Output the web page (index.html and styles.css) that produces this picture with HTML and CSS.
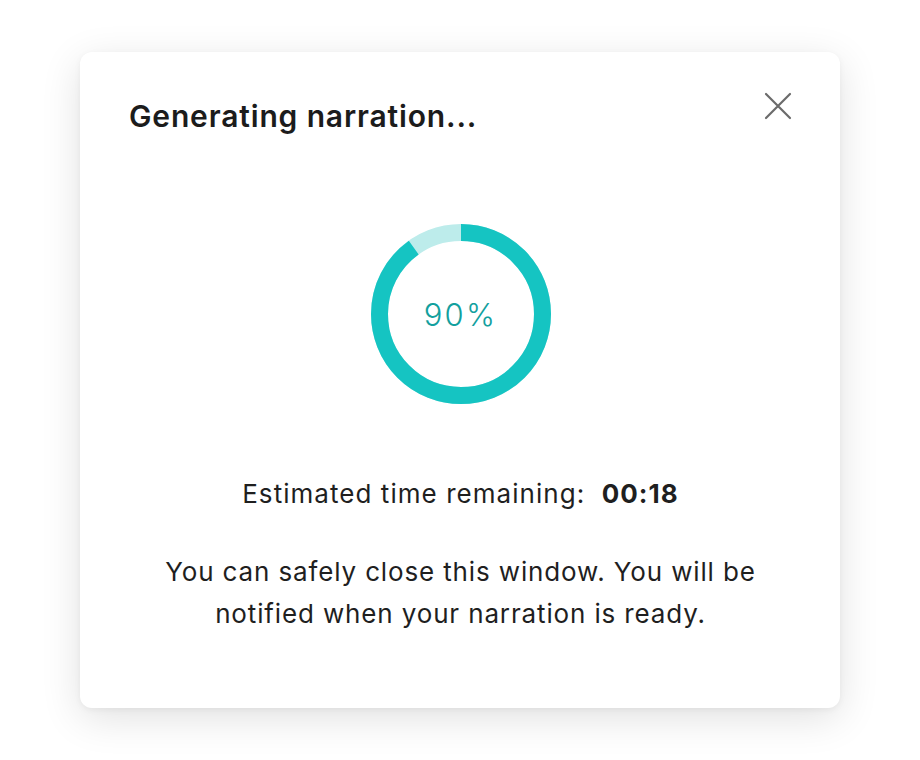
FILE: index.html
```html
<!DOCTYPE html>
<html lang="en">
<head>
<meta charset="utf-8">
<title>Generating narration</title>
<link rel="stylesheet" href="styles.css">
</head>
<body>
<div class="card">
  <div class="header">
    <h1 class="title">Generating narration...</h1>
    <button class="close" aria-label="Close">
      <svg width="28" height="28" viewBox="0 0 28 28"><path d="M2 2 L26 26 M26 2 L2 26" stroke="#6b6b6b" stroke-width="2.2" stroke-linecap="round" fill="none"/></svg>
    </button>
  </div>
  <div class="ring-wrap">
    <svg class="ring" width="180" height="180" viewBox="0 0 180 180">
      <circle cx="90" cy="90" r="81.5" fill="none" stroke="#bdeceb" stroke-width="17"/>
      <circle cx="90" cy="90" r="81.5" fill="none" stroke="#15c4c2" stroke-width="17" stroke-dasharray="460.9 512.1" transform="rotate(-90 90 90)"/>
    </svg>
    <div class="pct">90%</div>
  </div>
  <p class="eta">Estimated time remaining: <strong>00:18</strong></p>
  <p class="note">You can safely close this window. You will be<br>notified when your narration is ready.</p>
</div>
</body>
</html>
```
FILE: styles.css
```css
html, body {
  margin: 0;
  padding: 0;
  background: #ffffff;
  font-family: Inter, "Noto Sans", sans-serif;
}
body {
  min-height: 760px;
  padding: 52px 0 52px 80px;
  box-sizing: border-box;
}
.card {
  width: 760px;
  height: 656px;
  box-sizing: border-box;
  background: #fff;
  border-radius: 12px;
  box-shadow: 0 10px 40px rgba(0, 0, 0, 0.12), 0 2px 6px rgba(0, 0, 0, 0.05);
  padding: 42px 48px 0 49px;
  display: flex;
  flex-direction: column;
  align-items: center;
}
.header {
  align-self: stretch;
  display: flex;
  justify-content: space-between;
  align-items: flex-start;
}
.title {
  margin: 0;
  font-size: 30px;
  line-height: 44px;
  font-weight: 600;
  color: #1c1c1c;
  letter-spacing: 0.85px;
}
.close {
  border: 0;
  background: none;
  padding: 0;
  margin: -2px 0 0 0;
  width: 28px;
  height: 28px;
  cursor: pointer;
}
.ring-wrap {
  position: relative;
  width: 180px;
  height: 180px;
  margin-top: 86px;
}
.ring { display: block; }
.pct {
  position: absolute;
  inset: 0;
  display: flex;
  align-items: center;
  justify-content: center;
  font-size: 31px;
  font-weight: 300;
  color: #12a09e;
  letter-spacing: 2.2px;
}
.eta {
  margin: 72px 0 0 0;
  font-size: 26px;
  line-height: 36px;
  color: #1f1f1f;
  white-space: pre;
  letter-spacing: 1.05px;
}
.eta strong { font-weight: 700; margin-left: 8px; }
.note {
  margin: 39px 0 0 0;
  font-size: 26px;
  line-height: 42px;
  color: #1f1f1f;
  text-align: center;
  letter-spacing: 0.86px;
}
```
